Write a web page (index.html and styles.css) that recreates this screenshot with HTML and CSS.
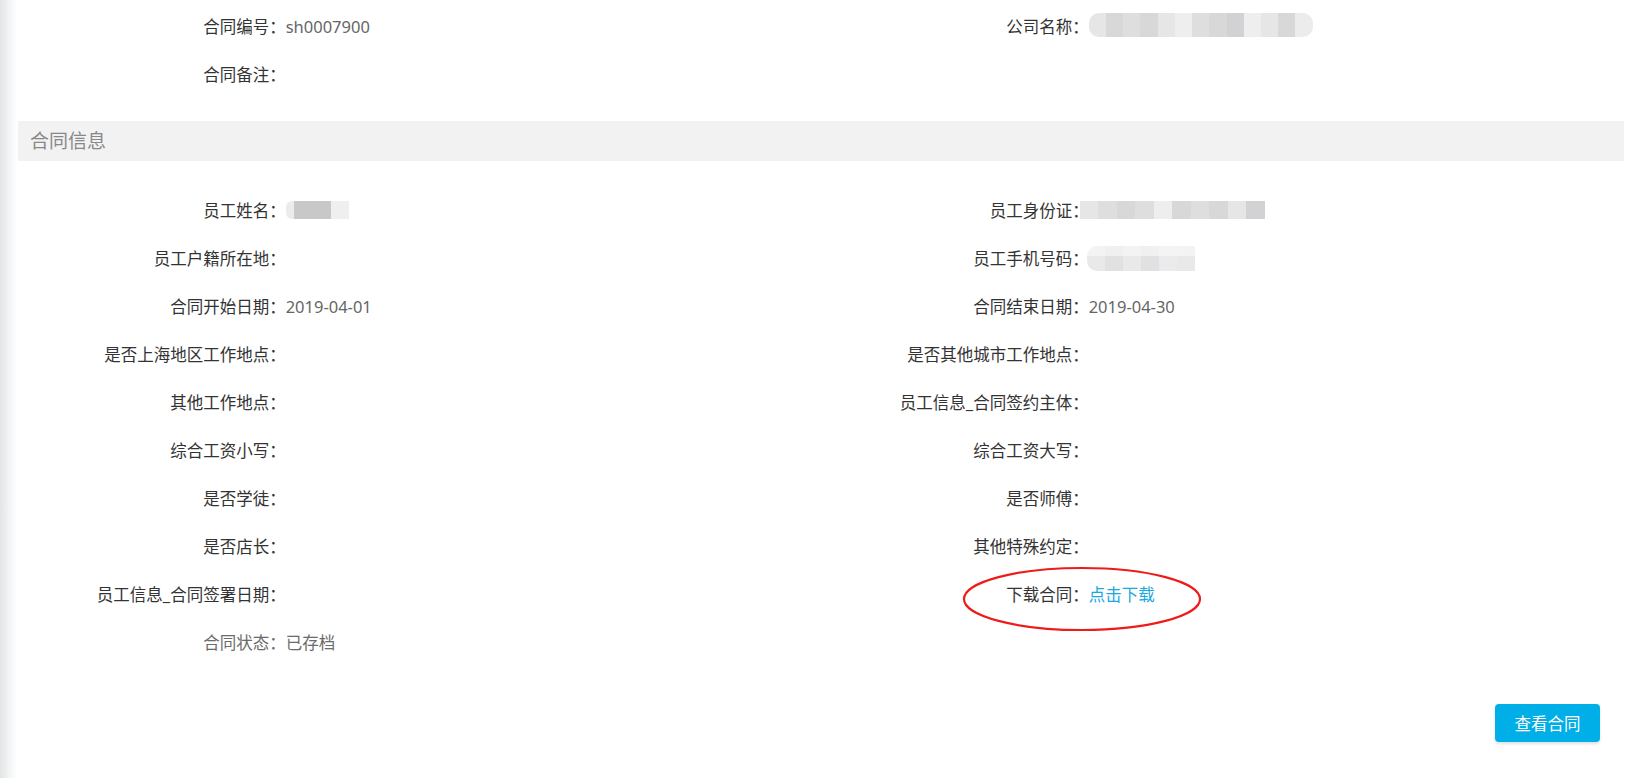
FILE: index.html
```html
<!DOCTYPE html>
<html lang="zh-CN">
<head>
<meta charset="utf-8">
<title>合同信息</title>
<link rel="stylesheet" href="styles.css">
</head>
<body>
<div class="page">
  <div class="form-grid">
    <div class="field"><span class="label">合同编号：</span><span class="value">sh0007900</span></div>
    <div class="field"><span class="label">公司名称：</span><span class="mosaic mosaic-company"><i class="m1"></i><i class="m2"></i><i class="m3"></i><i class="m2"></i><i class="m1"></i><i class="m4"></i><i class="m3"></i><i class="m2"></i><i class="m5"></i><i class="m4"></i><i class="m1"></i><i class="m2"></i><i class="m5"></i></span></div>
    <div class="field"><span class="label">合同备注：</span><span class="value"></span></div>
    <div class="field"></div>
  </div>

  <div class="section-title">合同信息</div>

  <div class="form-grid details">
    <div class="field"><span class="label">员工姓名：</span><span class="mosaic mosaic-name"><i class="n1"></i><i class="n2"></i><i class="n3"></i></span></div>
    <div class="field"><span class="label">员工身份证：</span><span class="mosaic mosaic-id"><i class="m1"></i><i class="m3"></i><i class="m2"></i><i class="m3"></i><i class="m4"></i><i class="m2"></i><i class="m3"></i><i class="m2"></i><i class="m1"></i><i class="m5"></i></span></div>
    <div class="field"><span class="label">员工户籍所在地：</span><span class="value"></span></div>
    <div class="field"><span class="label">员工手机号码：</span><span class="mosaic mosaic-phone"><i class="p1"></i><i class="p2"></i><i class="p1"></i><i class="p2"></i><i class="p3"></i><i class="p1"></i></span></div>
    <div class="field"><span class="label">合同开始日期：</span><span class="value">2019-04-01</span></div>
    <div class="field"><span class="label">合同结束日期：</span><span class="value">2019-04-30</span></div>
    <div class="field"><span class="label">是否上海地区工作地点：</span><span class="value"></span></div>
    <div class="field"><span class="label">是否其他城市工作地点：</span><span class="value"></span></div>
    <div class="field"><span class="label">其他工作地点：</span><span class="value"></span></div>
    <div class="field"><span class="label">员工信息_合同签约主体：</span><span class="value"></span></div>
    <div class="field"><span class="label">综合工资小写：</span><span class="value"></span></div>
    <div class="field"><span class="label">综合工资大写：</span><span class="value"></span></div>
    <div class="field"><span class="label">是否学徒：</span><span class="value"></span></div>
    <div class="field"><span class="label">是否师傅：</span><span class="value"></span></div>
    <div class="field"><span class="label">是否店长：</span><span class="value"></span></div>
    <div class="field"><span class="label">其他特殊约定：</span><span class="value"></span></div>
    <div class="field"><span class="label">员工信息_合同签署日期：</span><span class="value"></span></div>
    <div class="field download">
      <span class="label">下载合同：</span><a class="link" href="#">点击下载</a>
      <svg class="annotation" width="244" height="70" viewBox="0 0 244 70" aria-hidden="true">
        <ellipse cx="122" cy="35" rx="118" ry="31" fill="none" stroke="#ee1c18" stroke-width="2.2"/>
      </svg>
    </div>
    <div class="field muted"><span class="label">合同状态：</span><span class="value">已存档</span></div>
    <div class="field"></div>
  </div>

  <div class="actions">
    <button class="btn-primary" type="button">查看合同</button>
  </div>
</div>
</body>
</html>
```

FILE: styles.css
```css
* { box-sizing: border-box; }

html, body {
  margin: 0;
  padding: 0;
  height: 100%;
}

body {
  background: #fff linear-gradient(to right, #e3e4e6 0px, #f1f2f3 8px, #ffffff 17px) no-repeat;
  background-size: 18px 100%;
  font-family: "Noto Sans", "Noto Sans CJK SC", sans-serif;
  font-size: 16.5px;
  color: #333;
}

.page {
  padding: 2px 17px 0 18px;
}

.form-grid {
  display: grid;
  grid-template-columns: 1fr 1fr;
}

.field {
  position: relative;
  display: flex;
  align-items: center;
  height: 48px;
}

.label {
  flex: 0 0 33.333%;
  text-align: right;
  white-space: nowrap;
  color: #333;
}

.value {
  color: #666;
}

.muted .label,
.muted .value {
  color: #6b6b6b;
}

.section-title {
  margin-top: 23px;
  height: 40px;
  line-height: 40px;
  padding-left: 12px;
  background: #f2f2f2;
  color: #888;
  font-size: 19px;
}

.details {
  margin-top: 25px;
}

.link {
  color: #1aa7e2;
  text-decoration: none;
}

.annotation {
  position: absolute;
  left: 139px;
  top: -6px;
  pointer-events: none;
}

.mosaic {
  display: inline-flex;
  filter: blur(0.6px);
}

.mosaic i {
  display: block;
  height: 100%;
}

.mosaic-company {
  height: 24px;
  width: 224px;
  margin-top: -3px;
}
.mosaic-company i { width: 18px; }

.mosaic-name {
  height: 18px;
  margin-left: 0;
}
.mosaic-name .n1 { width: 8px; background: #ececec; border-radius: 6px 0 0 6px; }
.mosaic-name .n2 { width: 37px; background: #c8c8c8; }
.mosaic-name .n3 { width: 18px; background: #efefef; }

.mosaic-id {
  height: 18px;
  margin-left: -9px;
}
.mosaic-id i { width: 18.5px; }

.mosaic-phone {
  height: 25px;
  margin-left: -2px;
  border-radius: 10px 0 0 10px;
  overflow: hidden;
}
.mosaic-phone i { width: 18px; }
.mosaic-phone .p1 { background: linear-gradient(#f3f3f3 40%, #e9e9ea 40%); }
.mosaic-phone .p2 { background: linear-gradient(#f0f0f0 40%, #e1e1e2 40%); }
.mosaic-phone .p3 { background: linear-gradient(#f4f4f4 40%, #ebebee 40%); }

.m1 { background: #e6e6e6; }
.m2 { background: #d8d8d8; }
.m3 { background: #dedede; }
.m4 { background: #eeeeee; }
.m5 { background: #d2d2d4; }

.mosaic-company .m1:first-child { border-radius: 10px 0 0 10px; }
.mosaic-company i:last-child { border-radius: 0 10px 10px 0; background: #ececec; }

.actions {
  display: flex;
  justify-content: flex-end;
  margin-top: 38px;
  padding-right: 24px;
}

.btn-primary {
  width: 105px;
  height: 38px;
  border: none;
  border-radius: 4px;
  background: #00aee8;
  color: #fff;
  font-family: "Noto Sans CJK SC", sans-serif;
  font-size: 16.5px;
  box-shadow: 0 2px 3px rgba(0, 0, 0, 0.12);
  cursor: pointer;
}
```
